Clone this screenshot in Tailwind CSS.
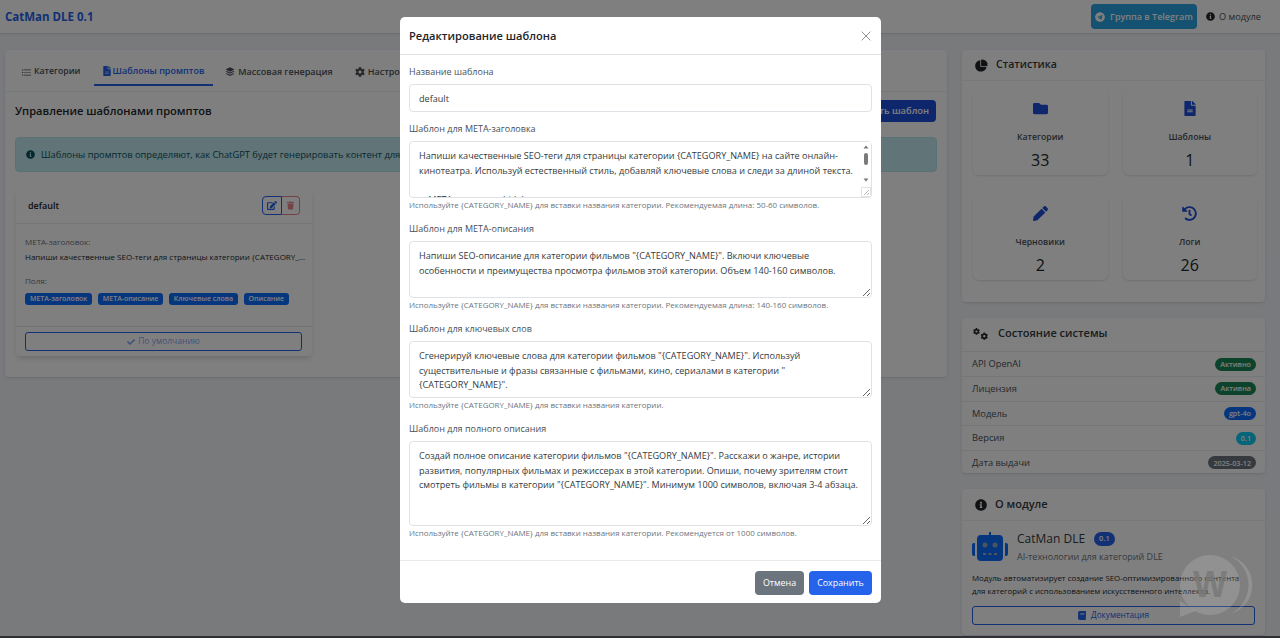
<!DOCTYPE html>
<html lang="ru">
<head>
    <meta charset="UTF-8">
    <title>CatMan DLE 0.1</title>
    <script src="https://cdn.jsdelivr.net/npm/@tailwindcss/browser@4"></script>
</head>
<body class="bg-[#f1f4f9] font-['Open_Sans','Noto_Sans',sans-serif] text-[#212529] h-[638px] overflow-hidden relative">
    <!-- Navbar -->
    <nav class="h-[33px] bg-white shadow-sm flex items-center pl-[5px] pr-[19px]">
        <span class="text-[11.5px] font-bold text-[#2563eb]">CatMan DLE 0.1</span>
        <div class="ml-auto flex items-center gap-[9px]">
            <a class="h-[25px] w-[106px] rounded bg-[#2aa3e0] text-white text-[9px] font-semibold flex items-center justify-center gap-[5px]">
                <svg viewBox="0 0 496 512" class="w-[10px] h-[10px] fill-white"><path d="M248 8C111 8 0 119 0 256s111 248 248 248 248-111 248-248S385 8 248 8zm121.800 169.900l-40.700 191.800c-3 13.600-11.100 16.900-22.400 10.500l-62-45.700-29.900 28.800c-3.300 3.300-6.100 6.100-12.500 6.100l4.400-63.100 114.900-103.800c5-4.400-1.100-6.900-7.700-2.500l-142 89.400-61.200-19.100c-13.300-4.200-13.600-13.300 2.800-19.700l239.100-92.200c11.100-4 20.800 2.700 17.200 19.500z"/></svg>
                Группа в Telegram
            </a>
            <a class="text-[9.2px] text-[#495057] flex items-center gap-[4px]">
                <svg viewBox="0 0 512 512" class="w-[9px] h-[9px] fill-[#212529]"><path d="M256 8C119 8 8 119.100 8 256c0 137 111 248 248 248s248-111 248-248C504 119.100 393 8 256 8zm0 110c23.200 0 42 18.800 42 42s-18.800 42-42 42-42-18.800-42-42 18.800-42 42-42zm56 254c0 6.600-5.400 12-12 12h-88c-6.600 0-12-5.400-12-12v-24c0-6.600 5.400-12 12-12h12v-64h-12c-6.600 0-12-5.400-12-12v-24c0-6.600 5.400-12 12-12h64c6.600 0 12 5.400 12 12v100h12c6.600 0 12 5.400 12 12v24z"/></svg>
                О модуле
            </a>
        </div>
    </nav>

    <main class="flex items-start gap-[15px] pl-[5px] pt-[17px]">
        <!-- Left card -->
        <section class="w-[942px] h-[327px] bg-white rounded shadow-sm overflow-hidden">
            <div class="h-[42px] border-b border-[#e9ecef] flex items-start pt-[8px] pl-[13px] gap-[9px] text-[8.7px] font-semibold text-[#495057]">
                <a class="h-[28px] px-[4px] flex items-center gap-[3px]">
                    <svg viewBox="0 0 512 512" class="w-[9px] h-[9px] fill-[#495057]"><path d="M0 80h64v60H0zM96 90h416v40H96zM0 226h64v60H0zM96 236h416v40H96zM0 372h64v60H0zM96 382h416v40H96z"/></svg>
                    Категории
                </a>
                <a class="h-[28px] px-[9px] text-[9px] flex items-center gap-[2px] text-[#2563eb] border-b-2 border-[#2563eb]">
                    <svg viewBox="0 0 384 512" class="w-[8px] h-[10px] fill-[#2563eb]"><path d="M224 136V0H24C10.700 0 0 10.700 0 24v464c0 13.300 10.700 24 24 24h336c13.300 0 24-10.700 24-24V160H248c-13.200 0-24-10.800-24-24zm64 236c0 6.600-5.400 12-12 12H108c-6.600 0-12-5.400-12-12v-8c0-6.600 5.400-12 12-12h168c6.600 0 12 5.400 12 12v8zm0-64c0 6.600-5.400 12-12 12H108c-6.600 0-12-5.400-12-12v-8c0-6.600 5.400-12 12-12h168c6.600 0 12 5.400 12 12v8zm96-187.100v6.100H256V0h6.100c6.400 0 12.500 2.500 17 7l97.900 98c4.500 4.500 7 10.600 7 16.900z"/></svg>
                    Шаблоны промптов
                </a>
                <a class="h-[28px] px-[3px] text-[9px] flex items-center gap-[3px]">
                    <svg viewBox="0 0 512 512" class="w-[10px] h-[10px] fill-[#495057]"><path d="M256 16 24 128l232 112 232-112zM24 232l64-30 168 82 168-82 64 30-232 112zM24 344l64-30 168 82 168-82 64 30-232 112z"/></svg>
                    Массовая генерация
                </a>
                <a class="h-[28px] px-[3px] text-[9px] ml-[7px] flex items-center gap-[3px]">
                    <svg viewBox="0 0 512 512" class="w-[10px] h-[10px] fill-[#495057]"><path d="M487.400 315.700l-42.600-24.600c4.300-23.200 4.300-47 0-70.200l42.600-24.600c4.900-2.800 7.100-8.600 5.500-14-11.100-35.600-30-67.800-54.700-94.600-3.800-4.100-10-5.100-14.800-2.300L380.800 110c-17.900-15.400-38.500-27.300-60.800-35.100V25.800c0-5.600-3.900-10.500-9.400-11.700-36.700-8.200-74.300-7.800-109.200 0-5.500 1.200-9.400 6.100-9.400 11.700V75c-22.200 7.900-42.800 19.800-60.800 35.100L88.700 85.500c-4.900-2.800-11-1.900-14.800 2.300-24.700 26.700-43.600 58.900-54.700 94.600-1.700 5.400.6 11.200 5.500 14L67.300 221c-4.300 23.200-4.300 47 0 70.200l-42.600 24.600c-4.900 2.800-7.100 8.600-5.500 14 11.100 35.600 30 67.800 54.700 94.600 3.800 4.100 10 5.100 14.800 2.300l42.600-24.600c17.900 15.400 38.500 27.300 60.800 35.100v49.200c0 5.600 3.900 10.500 9.400 11.700 36.700 8.200 74.300 7.800 109.200 0 5.500-1.200 9.400-6.100 9.400-11.700v-49.200c22.200-7.900 42.800-19.800 60.800-35.100l42.600 24.600c4.900 2.800 11 1.900 14.800-2.300 24.700-26.700 43.600-58.900 54.700-94.600 1.500-5.500-.7-11.300-5.600-14.100zM256 336c-44.100 0-80-35.900-80-80s35.900-80 80-80 80 35.900 80 80-35.900 80-80 80z"/></svg>
                    Настройки
                </a>
            </div>
            <div class="pl-[10px] pr-[10px]">
                <div class="h-[22px] mt-[8px] pr-[1px] flex items-center justify-between">
                    <h2 class="text-[11.1px] font-semibold">Управление шаблонами промптов</h2>
                    <a class="h-[22px] px-[7px] rounded bg-[#1d4ed8] text-white text-[9.3px] font-semibold flex items-center">Создать шаблон</a>
                </div>
                <div class="mt-[15px] h-[35px] rounded bg-[#c3e8ef] border border-[#b0e4ee] text-[#055160] text-[9.3px] flex items-center pl-[10px] gap-[6px]">
                    <svg viewBox="0 0 512 512" class="w-[9px] h-[9px] fill-[#055160]"><path d="M256 8C119 8 8 119.100 8 256c0 137 111 248 248 248s248-111 248-248C504 119.100 393 8 256 8zm0 110c23.200 0 42 18.800 42 42s-18.800 42-42 42-42-18.800-42-42 18.800-42 42-42zm56 254c0 6.600-5.400 12-12 12h-88c-6.600 0-12-5.400-12-12v-24c0-6.600 5.400-12 12-12h12v-64h-12c-6.600 0-12-5.400-12-12v-24c0-6.600 5.400-12 12-12h64c6.600 0 12 5.400 12 12v100h12c6.600 0 12 5.400 12 12v24z"/></svg>
                    Шаблоны промптов определяют, как ChatGPT будет генерировать контент для категорий. Вы можете создать несколько шаблонов.
                </div>
                <!-- Template card -->
                <div class="mt-[16px] ml-[1px] w-[296px] h-[168px] bg-white rounded shadow-md flex flex-col">
                    <div class="h-[36px] border-b border-[#e9ecef] flex items-center justify-between pl-[12px] pr-[12px]">
                        <span class="text-[9px] font-semibold pt-[1px]">default</span>
                        <div class="flex">
                            <span class="w-[20px] h-[19px] rounded-l border border-[#2563eb] flex items-center justify-center">
                                <svg viewBox="0 0 576 512" class="w-[10px] h-[9px] fill-[#2563eb]"><path d="M402.600 83.200l90.200 90.200c3.800 3.800 3.800 10 0 13.800L274.400 405.600l-92.800 10.300c-12.400 1.400-22.900-9.100-21.500-21.500l10.300-92.800L388.800 83.200c3.800-3.800 10-3.800 13.800 0zm162-22.900l-48.800-48.800c-15.200-15.200-39.900-15.200-55.200 0l-35.400 35.400c-3.800 3.800-3.800 10 0 13.800l90.200 90.200c3.800 3.800 10 3.800 13.800 0l35.400-35.400c15.200-15.300 15.200-40 0-55.200zM384 346.200V448H64V128h229.800c3.200 0 6.200-1.300 8.500-3.500l40-40c7.600-7.600 2.200-20.500-8.500-20.500H48C21.500 64 0 85.500 0 112v352c0 26.500 21.500 48 48 48h352c26.500 0 48-21.500 48-48V306.200c0-10.700-12.900-16-20.500-8.500l-40 40c-2.200 2.300-3.500 5.300-3.500 8.500z"/></svg>
                            </span>
                            <span class="w-[18px] h-[19px] rounded-r border border-l-0 border-[#dc3545]/60 flex items-center justify-center">
                                <svg viewBox="0 0 448 512" class="w-[7px] h-[9px] fill-[#dc3545]/60"><path d="M432 32H312l-9.400-18.700A24 24 0 0 0 281.100 0H166.800a23.720 23.720 0 0 0-21.400 13.300L136 32H16A16 16 0 0 0 0 48v32a16 16 0 0 0 16 16h416a16 16 0 0 0 16-16V48a16 16 0 0 0-16-16zM53.200 467a48 48 0 0 0 47.900 45h245.800a48 48 0 0 0 47.900-45L416 128H32z"/></svg>
                            </span>
                        </div>
                    </div>
                    <div class="px-[9px] pt-[12px] flex-1 text-[8px] leading-[12px]">
                        <p class="text-[#6c757d]">META-заголовок:</p>
                        <p class="mt-[3px] whitespace-nowrap">Напиши качественные SEO-теги для страницы категории {CATEGORY_...</p>
                        <p class="mt-[12px] text-[#6c757d]">Поля:</p>
                        <div class="mt-[6px] flex gap-[5.500px] text-white text-[7px] font-semibold">
                            <span class="h-[12px] px-[5px] rounded-[3px] bg-[#0d6efd] flex items-center">META-заголовок</span>
                            <span class="h-[12px] px-[5px] rounded-[3px] bg-[#0d6efd] flex items-center">META-описание</span>
                            <span class="h-[12px] px-[5px] rounded-[3px] bg-[#0d6efd] flex items-center">Ключевые слова</span>
                            <span class="h-[12px] px-[5px] rounded-[3px] bg-[#0d6efd] flex items-center">Описание</span>
                        </div>
                    </div>
                    <div class="h-[30px] border-t border-[#dee2e6] pl-[9px] pr-[10px] pt-[5px]">
                        <div class="h-[19px] rounded-[3px] border border-[#2563eb] text-[#2563eb]/60 text-[8.5px] flex items-center justify-center gap-[3px]">
                            <svg viewBox="0 0 512 512" class="w-[8px] h-[8px] fill-[#2563eb]/60"><path d="M173.898 439.404l-166.400-166.400c-9.997-9.997-9.997-26.206 0-36.204l36.203-36.204c9.997-9.998 26.206-9.998 36.204 0L192 312.690 432.095 72.596c9.997-9.997 26.206-9.997 36.204 0l36.203 36.204c9.997 9.997 9.997 26.206 0 36.204l-294.400 294.401c-9.998 9.997-26.207 9.997-36.204-.001z"/></svg>
                            По умолчанию
                        </div>
                    </div>
                </div>
            </div>
        </section>

        <!-- Right column -->
        <aside class="w-[303px] flex flex-col gap-[16px]">
            <section class="h-[252px] bg-white rounded shadow-sm">
                <div class="h-[31px] border-b border-[#eef0f3] flex items-center pl-[13px] gap-[8px] text-[10.6px] font-semibold text-[#343a40]">
                    <svg viewBox="0 0 512 512" class="w-[13px] h-[13px] fill-[#212529]"><path d="M240 16v256h256C496 131 381 16 240 16zM208 48C93 60 8 156 8 272c0 124 100 224 224 224 116 0 212-85 224-192H208zM304 16v176h192C488 100 396 24 304 16z"/></svg>
                    Статистика
                </div>
                <div class="grid grid-cols-2 gap-x-[15px] gap-y-[20px] pl-[11px] pr-[8px] pt-[9px]">
                    <div class="h-[85px] rounded-md shadow-sm flex flex-col items-center pt-[11px]">
                        <svg viewBox="0 0 512 512" class="w-[15px] h-[15px] fill-[#1d4ed8]"><path d="M464 128H272l-64-64H48C21.490 64 0 85.490 0 112v288c0 26.510 21.490 48 48 48h416c26.510 0 48-21.490 48-48V176c0-26.510-21.490-48-48-48z"/></svg>
                        <span class="mt-[15px] text-[8.7px] leading-[13px] font-semibold text-[#495057]">Категории</span>
                        <span class="mt-[6px] text-[16px] leading-[20px] font-medium">33</span>
                    </div>
                    <div class="h-[85px] rounded-md shadow-sm flex flex-col items-center pt-[11px]">
                        <svg viewBox="0 0 384 512" class="w-[12px] h-[15px] fill-[#1d4ed8]"><path d="M224 136V0H24C10.700 0 0 10.700 0 24v464c0 13.300 10.700 24 24 24h336c13.300 0 24-10.700 24-24V160H248c-13.200 0-24-10.800-24-24zm64 236c0 6.600-5.400 12-12 12H108c-6.600 0-12-5.400-12-12v-8c0-6.600 5.400-12 12-12h168c6.600 0 12 5.400 12 12v8zm0-64c0 6.600-5.400 12-12 12H108c-6.600 0-12-5.400-12-12v-8c0-6.600 5.400-12 12-12h168c6.600 0 12 5.400 12 12v8zm96-187.100v6.100H256V0h6.100c6.400 0 12.500 2.500 17 7l97.900 98c4.500 4.500 7 10.600 7 16.900z"/></svg>
                        <span class="mt-[15px] text-[8.7px] leading-[13px] font-semibold text-[#495057]">Шаблоны</span>
                        <span class="mt-[6px] text-[16px] leading-[20px] font-medium">1</span>
                    </div>
                    <div class="h-[85px] rounded-md shadow-sm flex flex-col items-center pt-[11px]">
                        <svg viewBox="0 0 512 512" class="w-[15px] h-[15px] fill-[#1d4ed8]"><path d="M497.900 142.100l-46.100 46.100c-4.700 4.700-12.300 4.700-17 0l-111-111c-4.700-4.700-4.700-12.300 0-17l46.100-46.100c18.700-18.700 49.100-18.700 67.900 0l60.100 60.100c18.800 18.700 18.800 49.100 0 67.900zM284.200 99.800L21.600 362.400.4 483.900c-2.900 16.400 11.400 30.600 27.800 27.800l121.500-21.300 262.600-262.600c4.700-4.700 4.700-12.300 0-17l-111-111c-4.800-4.700-12.400-4.700-17.100 0z"/></svg>
                        <span class="mt-[15px] text-[8.7px] leading-[13px] font-semibold text-[#495057]">Черновики</span>
                        <span class="mt-[6px] text-[16px] leading-[20px] font-medium">2</span>
                    </div>
                    <div class="h-[85px] rounded-md shadow-sm flex flex-col items-center pt-[11px]">
                        <svg viewBox="0 0 512 512" class="w-[15px] h-[15px] fill-[#1d4ed8]"><path d="M504 255.531c.253 136.640-111.180 248.372-247.820 248.468-59.015.042-113.223-20.530-155.822-54.911-11.077-8.940-11.905-25.541-1.839-35.607l11.267-11.267c8.609-8.609 22.353-9.551 31.891-1.984C173.062 425.135 212.781 440 256 440c101.705 0 184-82.311 184-184 0-101.705-82.311-184-184-184-48.814 0-93.149 18.969-126.068 49.932l50.754 50.754c10.080 10.080 2.941 27.314-11.313 27.314H24c-8.837 0-16-7.163-16-16V38.627c0-14.254 17.234-21.393 27.314-11.314l49.372 49.372C129.209 34.136 189.552 8 256 8c136.810 0 247.747 110.780 248 247.531zm-180.912 78.784l9.823-12.630c8.138-10.463 6.253-25.542-4.210-33.679L288 256.349V152c0-13.255-10.745-24-24-24h-16c-13.255 0-24 10.745-24 24v135.651l65.409 50.874c10.463 8.137 25.541 6.253 33.679-4.210z"/></svg>
                        <span class="mt-[15px] text-[8.7px] leading-[13px] font-semibold text-[#495057]">Логи</span>
                        <span class="mt-[6px] text-[16px] leading-[20px] font-medium">26</span>
                    </div>
                </div>
            </section>

            <section class="h-[155px] bg-white rounded shadow-sm">
                <div class="h-[33px] pb-[2px] flex items-center pl-[11px] gap-[10px] text-[11px] font-semibold text-[#343a40]">
                    <svg viewBox="0 0 640 512" class="w-[15px] h-[12px] fill-[#212529]">
                        <g transform="translate(0,0) scale(0.58)"><path d="M487.400 315.700l-42.600-24.600c4.300-23.200 4.300-47 0-70.200l42.600-24.600c4.900-2.800 7.100-8.600 5.500-14-11.100-35.600-30-67.800-54.700-94.600-3.800-4.100-10-5.100-14.800-2.300L380.800 110c-17.900-15.400-38.500-27.300-60.800-35.100V25.800c0-5.600-3.900-10.500-9.400-11.700-36.700-8.200-74.300-7.800-109.200 0-5.500 1.200-9.400 6.100-9.400 11.700V75c-22.200 7.900-42.800 19.800-60.800 35.100L88.700 85.500c-4.900-2.800-11-1.900-14.800 2.300-24.700 26.700-43.600 58.900-54.700 94.600-1.700 5.400.6 11.200 5.500 14L67.300 221c-4.300 23.200-4.300 47 0 70.200l-42.600 24.600c-4.900 2.800-7.100 8.600-5.500 14 11.100 35.600 30 67.800 54.700 94.600 3.800 4.100 10 5.100 14.800 2.300l42.600-24.600c17.900 15.400 38.500 27.300 60.800 35.100v49.200c0 5.600 3.900 10.500 9.400 11.700 36.700 8.200 74.300 7.800 109.200 0 5.500-1.200 9.400-6.100 9.400-11.700v-49.200c22.200-7.900 42.800-19.800 60.800-35.100l42.600 24.600c4.900 2.800 11 1.900 14.800-2.300 24.700-26.700 43.600-58.900 54.700-94.600 1.500-5.500-.7-11.300-5.600-14.100zM256 336c-44.100 0-80-35.900-80-80s35.900-80 80-80 80 35.900 80 80-35.900 80-80 80z"/></g>
                        <g transform="translate(320,192) scale(0.63)"><path d="M487.400 315.700l-42.600-24.600c4.300-23.200 4.300-47 0-70.200l42.600-24.600c4.900-2.800 7.100-8.600 5.500-14-11.100-35.600-30-67.800-54.700-94.600-3.800-4.100-10-5.100-14.800-2.300L380.800 110c-17.900-15.400-38.500-27.300-60.800-35.100V25.800c0-5.600-3.900-10.500-9.400-11.700-36.700-8.200-74.300-7.800-109.200 0-5.500 1.200-9.400 6.100-9.400 11.700V75c-22.200 7.900-42.800 19.800-60.800 35.100L88.700 85.500c-4.900-2.800-11-1.900-14.800 2.300-24.700 26.700-43.600 58.900-54.700 94.600-1.700 5.400.6 11.200 5.500 14L67.300 221c-4.300 23.200-4.300 47 0 70.200l-42.600 24.600c-4.900 2.800-7.100 8.600-5.500 14 11.100 35.600 30 67.800 54.700 94.600 3.800 4.100 10 5.100 14.800 2.300l42.600-24.600c17.900 15.400 38.500 27.300 60.800 35.100v49.200c0 5.600 3.900 10.500 9.400 11.700 36.700 8.200 74.300 7.800 109.200 0 5.500-1.200 9.400-6.100 9.400-11.700v-49.200c22.200-7.900 42.800-19.800 60.800-35.100l42.600 24.600c4.900 2.800 11 1.900 14.800-2.300 24.700-26.700 43.600-58.900 54.700-94.600 1.500-5.500-.7-11.300-5.600-14.100zM256 336c-44.100 0-80-35.900-80-80s35.900-80 80-80 80 35.900 80 80-35.900 80-80 80z"/></g>
                    </svg>
                    Состояние системы
                </div>
                <div class="text-[9.3px] text-[#495057]">
                    <div class="h-[25px] border-t border-[#e9ecef] flex items-center justify-between pl-[10px] pr-[9px]">API OpenAI<span class="h-[13px] px-[5px] rounded-full bg-[#198754] text-white text-[7.2px] font-semibold flex items-center">Активно</span></div>
                    <div class="h-[24.700px] border-t border-[#e9ecef] flex items-center justify-between pl-[10px] pr-[9px]">Лицензия<span class="h-[13px] px-[5px] rounded-full bg-[#198754] text-white text-[7.2px] font-semibold flex items-center">Активна</span></div>
                    <div class="h-[24.700px] border-t border-[#e9ecef] flex items-center justify-between pl-[10px] pr-[9px]">Модель<span class="h-[13px] px-[5px] rounded-full bg-[#0d6efd] text-white text-[7.2px] font-semibold flex items-center">gpt-4o</span></div>
                    <div class="h-[24.700px] border-t border-[#e9ecef] flex items-center justify-between pl-[10px] pr-[9px]">Версия<span class="h-[13px] px-[5px] rounded-full bg-[#0dcaf0] text-white text-[7.2px] font-semibold flex items-center">0.1</span></div>
                    <div class="h-[24.700px] border-t border-[#e9ecef] flex items-center justify-between pl-[10px] pr-[9px]">Дата выдачи<span class="h-[13px] px-[5px] rounded-full bg-[#6c757d] text-white text-[7.2px] font-semibold flex items-center">2025-03-12</span></div>
                </div>
            </section>

            <section class="h-[146px] bg-white rounded shadow-sm">
                <div class="h-[32px] border-b border-[#eef0f3] flex items-center pl-[13px] gap-[8px] text-[11px] font-semibold text-[#343a40]">
                    <svg viewBox="0 0 512 512" class="w-[12px] h-[12px] fill-[#212529]"><path d="M256 8C119 8 8 119.100 8 256c0 137 111 248 248 248s248-111 248-248C504 119.100 393 8 256 8zm0 110c23.200 0 42 18.800 42 42s-18.800 42-42 42-42-18.800-42-42 18.800-42 42-42zm56 254c0 6.600-5.400 12-12 12h-88c-6.600 0-12-5.400-12-12v-24c0-6.600 5.400-12 12-12h12v-64h-12c-6.600 0-12-5.400-12-12v-24c0-6.600 5.400-12 12-12h64c6.600 0 12 5.400 12 12v100h12c6.600 0 12 5.400 12 12v24z"/></svg>
                    О модуле
                </div>
                <div class="px-[10px] pt-[11px]">
                    <div class="flex gap-[9px]">
                        <svg viewBox="0 0 36 29" class="w-[36px] h-[29px] fill-[#0d6efd]"><path d="M17 0h2v4h-2zM9 3h18a4 4 0 0 1 4 4v18a4 4 0 0 1-4 4H9a4 4 0 0 1-4-4V7a4 4 0 0 1 4-4zM0 13a2 2 0 0 1 2-2h1v13H2a2 2 0 0 1-2-2zM33 11h1a2 2 0 0 1 2 2v9a2 2 0 0 1-2 2h-1z"/><circle cx="13" cy="13" r="2.500" fill="#9ab"/><circle cx="23" cy="13" r="2.500" fill="#9ab"/><path d="M11 21h3v2h-3zM16.500 21h3v2h-3zM22 21h3v2h-3z" fill="#9ab"/></svg>
                        <div class="leading-none">
                            <div class="flex items-center gap-[9px] text-[12px] font-medium text-[#343a40]">CatMan DLE <span class="h-[14px] px-[5px] rounded-full bg-[#2563eb] text-white text-[7.5px] font-semibold flex items-center">0.1</span></div>
                            <p class="mt-[6px] text-[9px] text-[#6c757d]">AI-технологии для категорий DLE</p>
                        </div>
                    </div>
                    <p class="mt-[11px] text-[7.9px] leading-[12.500px] text-[#212529]">Модуль автоматизирует создание SEO-оптимизированного контента<br>для категорий с использованием искусственного интеллекта.</p>
                    <div class="mt-[9px] h-[19px] rounded-[3px] border border-[#2563eb] text-[#2563eb] text-[8.2px] flex items-center justify-center gap-[5px]">
                        <svg viewBox="0 0 448 512" class="w-[8px] h-[9px] fill-[#2563eb]"><path d="M448 360V24c0-13.300-10.700-24-24-24H96C43 0 0 43 0 96v320c0 53 43 96 96 96h328c13.300 0 24-10.700 24-24v-16c0-7.500-3.500-14.300-8.900-18.700-4.200-15.400-4.200-59.300 0-74.700 5.400-4.300 8.900-11.100 8.900-18.600zM128 134c0-3.300 2.700-6 6-6h212c3.300 0 6 2.700 6 6v20c0 3.300-2.700 6-6 6H134c-3.300 0-6-2.700-6-6v-20zm0 64c0-3.300 2.700-6 6-6h212c3.300 0 6 2.700 6 6v20c0 3.300-2.700 6-6 6H134c-3.300 0-6-2.700-6-6v-20z"/></svg>
                        Документация
                    </div>
                </div>
            </section>
        </aside>
    </main>

    <!-- Modal overlay -->
    <div class="absolute inset-0 bg-black/50">
        <div class="ml-[400px] mt-[17px] w-[481px] h-[586px] bg-white rounded-[5px] flex flex-col">
            <div class="h-[38px] shrink-0 border-b border-[#dee2e6] flex items-center justify-between pl-[9px] pr-[10px]">
                <h3 class="text-[11.1px] font-semibold text-[#212529] pt-[1px]">Редактирование шаблона</h3>
                <svg viewBox="0 0 16 16" class="w-[10px] h-[10px] stroke-[#888] stroke-[1.5] mt-[1px]"><path d="M1 1l14 14M15 1L1 15"/></svg>
            </div>
            <form class="flex-1 px-[9px] pt-[10px] text-[9px] text-[#495057]">
                <label class="block h-[14px] leading-[14px] mb-[5px]">Название шаблона</label>
                <input type="text" value="default" class="block w-full h-[28px] px-[9px] text-[9.1px] text-[#343a40] border border-[#dee2e6] rounded-[4px] mb-[10px]">

                <label class="block h-[14px] leading-[14px] mb-[5px]">Шаблон для META-заголовка</label>
                <div class="relative h-[57px]">
                    <textarea class="block w-full h-[57px] pl-[9px] pr-[12px] py-[7px] text-[9.1px] leading-[14.500px] text-[#343a40] border border-[#dee2e6] rounded-[4px] resize-none overflow-hidden">Напиши качественные SEO-теги для страницы категории {CATEGORY_NAME} на сайте онлайн-кинотеатра. Используй естественный стиль, добавляй ключевые слова и следи за длиной текста.

◆ META-заголовок (title):</textarea>
                    <!-- classic scrollbar -->
                    <div class="absolute right-[1px] top-[1px] bottom-[1px] w-[10px] bg-white">
                        <svg viewBox="0 0 10 55" class="w-[10px] h-[55px]">
                            <path d="M5 3.500l2.500 3h-5z" fill="#777"/>
                            <rect x="3" y="11" width="4" height="12" rx="2" fill="#7a7a7a"/>
                            <path d="M5 39.500l-2.500-3h5z" fill="#777"/>
                            <rect x=".5" y="45.500" width="9" height="9" fill="#fff" stroke="#e4e4e4"/>
                            <path d="M8 48l-5 5M8 51l-2 2" stroke="#aaa" stroke-width=".8"/>
                        </svg>
                    </div>
                </div>
                <p class="mt-[1px] mb-[11px] h-[12px] leading-[12px] text-[7.95px] text-[#6c757d]">Используйте {CATEGORY_NAME} для вставки названия категории. Рекомендуемая длина: 50-60 символов.</p>

                <label class="block h-[14px] leading-[14px] mb-[5px]">Шаблон для META-описания</label>
                <textarea class="block w-full h-[57px] px-[9px] py-[7px] text-[9.1px] leading-[14.500px] text-[#343a40] border border-[#dee2e6] rounded-[4px]">Напиши SEO-описание для категории фильмов "{CATEGORY_NAME}". Включи ключевые особенности и преимущества просмотра фильмов этой категории. Объем 140-160 символов.</textarea>
                <p class="mt-[1px] mb-[11px] h-[12px] leading-[12px] text-[7.95px] text-[#6c757d]">Используйте {CATEGORY_NAME} для вставки названия категории. Рекомендуемая длина: 140-160 символов.</p>

                <label class="block h-[14px] leading-[14px] mb-[5px]">Шаблон для ключевых слов</label>
                <textarea class="block w-full h-[57px] px-[9px] py-[7px] text-[9.1px] leading-[14.500px] text-[#343a40] border border-[#dee2e6] rounded-[4px]">Сгенерируй ключевые слова для категории фильмов "{CATEGORY_NAME}". Используй существительные и фразы связанные с фильмами, кино, сериалами в категории "{CATEGORY_NAME}".</textarea>
                <p class="mt-[1px] mb-[11px] h-[12px] leading-[12px] text-[7.95px] text-[#6c757d]">Используйте {CATEGORY_NAME} для вставки названия категории.</p>

                <label class="block h-[14px] leading-[14px] mb-[5px]">Шаблон для полного описания</label>
                <textarea class="block w-full h-[85px] px-[9px] py-[7px] text-[9.1px] leading-[14.500px] text-[#343a40] border border-[#dee2e6] rounded-[4px]">Создай полное описание категории фильмов "{CATEGORY_NAME}". Расскажи о жанре, истории развития, популярных фильмах и режиссерах в этой категории. Опиши, почему зрителям стоит смотреть фильмы в категории "{CATEGORY_NAME}". Минимум 1000 символов, включая 3-4 абзаца.</textarea>
                <p class="mt-[1px] h-[12px] leading-[12px] text-[7.95px] text-[#6c757d]">Используйте {CATEGORY_NAME} для вставки названия категории. Рекомендуется от 1000 символов.</p>
            </form>
            <div class="h-[43px] shrink-0 border-t border-[#e9ecef] flex items-start justify-end gap-[5px] pt-[10px] pr-[9px] text-[8.9px]">
                <button type="button" class="h-[24px] w-[49px] rounded-[4px] bg-[#6c757d] text-white">Отмена</button>
                <button type="button" class="h-[24px] w-[63px] rounded-[4px] bg-[#2563eb] text-white">Сохранить</button>
            </div>
        </div>
        <!-- bottom window edge -->
        <div class="absolute left-0 right-0 bottom-0 h-[2px] bg-[#2f3033]"></div>
    </div>

    <!-- Forum watermark -->
    <div class="absolute left-[1180px] top-[553px] w-[80px] h-[64px] pointer-events-none">
        <svg viewBox="0 0 80 64" class="w-full h-full">
            <circle cx="30" cy="32" r="30" fill="#fff" fill-opacity="0.14"/>
            <path d="M50 3a30 30 0 0 1 0 58 32 32 0 0 0 0-58z" fill="#fff" fill-opacity="0.14"/>
            <path d="M0 64l0-16 16 10z" fill="#fff" fill-opacity="0.14"/>
            <text x="30" y="44" text-anchor="middle" font-family="Liberation Sans" font-weight="700" font-size="36" fill="#777" fill-opacity="0.8">W</text>
        </svg>
    </div>
</body>
</html>
